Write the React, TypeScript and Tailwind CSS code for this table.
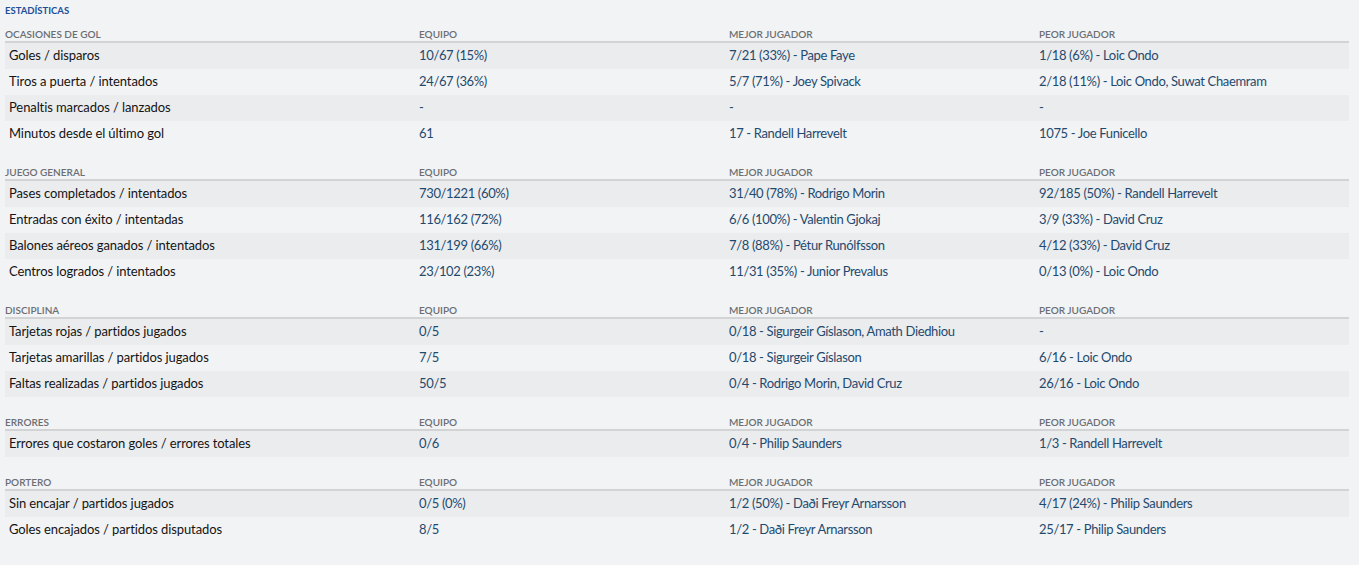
const sections = [
  {
    title: 'Ocasiones de gol',
    rows: [
      ['Goles / disparos', '10/67 (15%)', '7/21 (33%) - Pape Faye', '1/18 (6%) - Loic Ondo'],
      ['Tiros a puerta / intentados', '24/67 (36%)', '5/7 (71%) - Joey Spivack', '2/18 (11%) - Loic Ondo, Suwat Chaemram'],
      ['Penaltis marcados / lanzados', '-', '-', '-'],
      ['Minutos desde el último gol', '61', '17 - Randell Harrevelt', '1075 - Joe Funicello'],
    ],
  },
  {
    title: 'Juego general',
    rows: [
      ['Pases completados / intentados', '730/1221 (60%)', '31/40 (78%) - Rodrigo Morin', '92/185 (50%) - Randell Harrevelt'],
      ['Entradas con éxito / intentadas', '116/162 (72%)', '6/6 (100%) - Valentin Gjokaj', '3/9 (33%) - David Cruz'],
      ['Balones aéreos ganados / intentados', '131/199 (66%)', '7/8 (88%) - Pétur Runólfsson', '4/12 (33%) - David Cruz'],
      ['Centros logrados / intentados', '23/102 (23%)', '11/31 (35%) - Junior Prevalus', '0/13 (0%) - Loic Ondo'],
    ],
  },
  {
    title: 'Disciplina',
    rows: [
      ['Tarjetas rojas / partidos jugados', '0/5', '0/18 - Sigurgeir Gíslason, Amath Diedhiou', '-'],
      ['Tarjetas amarillas / partidos jugados', '7/5', '0/18 - Sigurgeir Gíslason', '6/16 - Loic Ondo'],
      ['Faltas realizadas / partidos jugados', '50/5', '0/4 - Rodrigo Morin, David Cruz', '26/16 - Loic Ondo'],
    ],
  },
  {
    title: 'Errores',
    rows: [['Errores que costaron goles / errores totales', '0/6', '0/4 - Philip Saunders', '1/3 - Randell Harrevelt']],
  },
  {
    title: 'Portero',
    rows: [
      ['Sin encajar / partidos jugados', '0/5 (0%)', '1/2 (50%) - Daði Freyr Arnarsson', '4/17 (24%) - Philip Saunders'],
      ['Goles encajados / partidos disputados', '8/5', '1/2 - Daði Freyr Arnarsson', '25/17 - Philip Saunders'],
    ],
  },
]

const cols = 'grid grid-cols-[414px_310px_310px_1fr]'

export default function App() {
  return (
    <div className="min-h-[565px] bg-[#f2f3f5] pl-[5px] pr-[10px] font-['Lato',sans-serif]">
      <div className="flex h-[20px] items-center pt-[2px] text-[9.5px] font-bold uppercase text-[#1d4f9a]">Estadísticas</div>
      <div className="flex flex-col gap-[11px]">
        {sections.map((s) => (
          <div key={s.title}>
            <div className={`${cols} h-[23px] border-b-2 border-[#d2d3d5] pt-[9px] text-[10px] font-semibold uppercase leading-[10px] text-[#6b6e72]`}>
              <span>{s.title}</span>
              <span>Equipo</span>
              <span>Mejor jugador</span>
              <span>Peor jugador</span>
            </div>
            {s.rows.map((r, i) => (
              <div
                key={r[0]}
                className={`${cols} h-[26px] items-center text-[13px] ${i % 2 === 0 ? 'bg-[#ebecee]' : ''}`}
              >
                <span className="pl-[4px] tracking-[-0.1px] text-[#141414]">{r[0]}</span>
                <span className="tracking-[-0.35px] text-[#1f4a6e]">{r[1]}</span>
                <span className="tracking-[-0.35px] text-[#1f4a6e]">{r[2]}</span>
                <span className="tracking-[-0.35px] text-[#1f4a6e]">{r[3]}</span>
              </div>
            ))}
          </div>
        ))}
      </div>
    </div>
  )
}
